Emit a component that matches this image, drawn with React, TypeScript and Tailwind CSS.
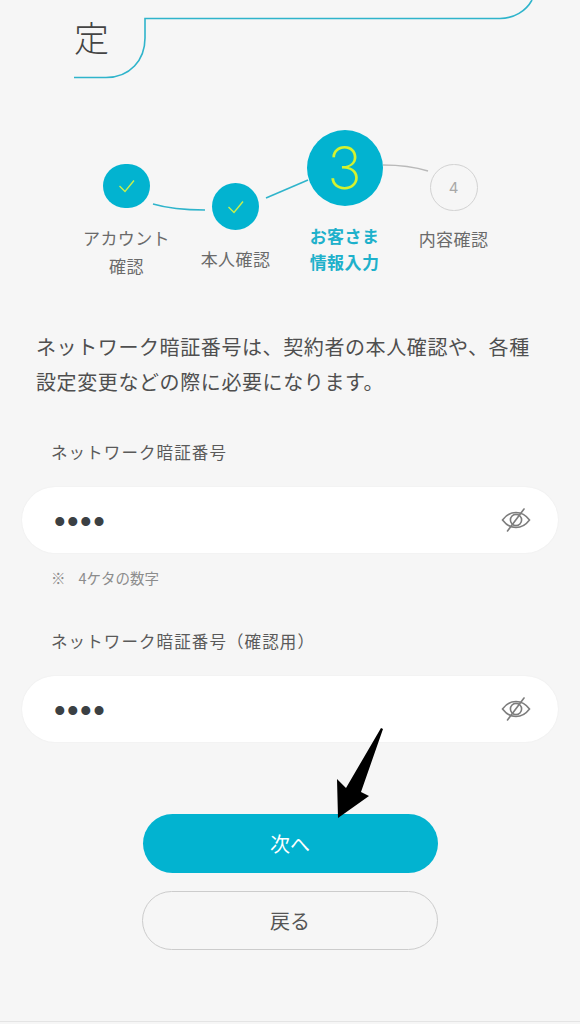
import React from 'react';

const Check = () => (
  <svg width="20" height="16" viewBox="0 0 20 16" fill="none" stroke="#c8f04a" strokeWidth="1.4">
    <path d="M2.5 8 L8 13.5 L17 2.5" />
  </svg>
);

const EyeOff = () => (
  <svg width="30" height="24" viewBox="0 0 30 24" fill="none" stroke="#7d7d7d" strokeWidth="1.6" strokeLinecap="round">
    <path d="M1.5 12 C6 6 10 4.5 15 4.5 C20 4.5 24 6 28.5 12 C24 18 20 19.5 15 19.5 C10 19.5 6 18 1.5 12 Z" />
    <circle cx="15" cy="12" r="5.6" />
    <path d="M23 1 L6.5 23" />
  </svg>
);

const PasswordField = ({ label, note }: { label: string; note?: string }) => (
  <div>
    <label className="block pl-[51px] text-[16.5px] leading-[24px] tracking-[1.1px] text-[#5a5a5a]">{label}</label>
    <div className="mt-[23px] mx-[22px] h-[66px] bg-white rounded-[33px] flex items-center justify-between pl-[32px] pr-[27px] shadow-[0_0_2px_rgba(0,0,0,0.06)]">
      <input
        type="password"
        readOnly
        value="1234"
        className="w-[200px] pt-[3px] bg-transparent outline-none text-[33px] tracking-[1.5px] text-[#3b4043] font-['Liberation_Sans',sans-serif]"
      />
      <EyeOff />
    </div>
    {note && (
      <p className="mt-[15px] pl-[51px] text-[14.5px] leading-[20px] text-[#8c8c8c]">
        ※<span className="ml-[13px]">{note}</span>
      </p>
    )}
  </div>
);

export default function App() {
  return (
    <div className="relative w-[580px] h-[1024px] overflow-hidden bg-[#f6f6f6] font-['Noto_Sans_CJK_JP',sans-serif] text-[#555]">
      {/* page title, cut off by the scroll */}
      <div className="relative h-[78px] pl-[74px] pt-[15px]">
        <svg className="absolute left-0 top-0" width="580" height="80" fill="none" stroke="#2fb4cb" strokeWidth="1.6">
          <path d="M74 77.5 H106 C130 77.5 145 60 145 38 V18.5 H500 C514 18.5 526 11 532 0" />
        </svg>
        <h1 className="text-[35px] leading-[44px] font-light text-[#444]">定</h1>
      </div>

      {/* stepper */}
      <div className="relative mt-[52px] flex pl-[72px] h-[150px]">
        <svg className="absolute left-0 top-0" width="580" height="120" fill="none" strokeWidth="1.6">
          <path d="M153 74 C170 79 188 80 205 80" stroke="#2fb4cb" />
          <path d="M266 68 L308 50" stroke="#2fb4cb" />
          <path d="M383 35 C400 35 415 37 428 41" stroke="#b9b9b9" />
        </svg>
        <div className="w-[109px] flex flex-col items-center pt-[34px]">
          <div className="w-[47px] h-[47px] rounded-full bg-[#02b3d0] flex items-center justify-center"><Check /></div>
          <p className="mt-[16px] text-center text-[17px] leading-[28px] tracking-[0.4px] text-[#6a6a6a] whitespace-nowrap">アカウント<br />確認</p>
        </div>
        <div className="w-[109px] flex flex-col items-center pt-[53px]">
          <div className="w-[47px] h-[47px] rounded-full bg-[#02b3d0] flex items-center justify-center"><Check /></div>
          <p className="mt-[15px] text-center text-[17px] leading-[28px] tracking-[0.4px] text-[#6a6a6a] whitespace-nowrap">本人確認</p>
        </div>
        <div className="w-[109px] flex flex-col items-center">
          <div className="w-[76px] h-[76px] rounded-full bg-[#02b3d0] flex items-center justify-center text-[58px] leading-none font-extralight text-[#d4f22f] font-['Inter',sans-serif]">3</div>
          <p className="mt-[17px] text-center text-[17px] leading-[26px] tracking-[0.4px] font-bold text-[#1eb1cb] whitespace-nowrap">お客さま<br />情報入力</p>
        </div>
        <div className="w-[109px] flex flex-col items-center pt-[34px]">
          <div className="w-[48px] h-[47px] rounded-full border border-[#d2d2d2] flex items-center justify-center pt-[2px] text-[15px] text-[#a8a8a8] font-['Inter',sans-serif]">4</div>
          <p className="mt-[14px] text-center text-[17px] leading-[28px] tracking-[0.4px] text-[#6a6a6a] whitespace-nowrap">内容確認</p>
        </div>
      </div>

      <p className="mt-[49px] pl-[36px] text-[20px] leading-[35px] tracking-[0.6px] text-[#4f4f4f] whitespace-nowrap">
        ネットワーク暗証番号は、契約者の本人確認や、各種<br />設定変更などの際に必要になります。
      </p>

      <div className="mt-[41px]">
        <PasswordField label="ネットワーク暗証番号" note="4ケタの数字" />
      </div>
      <div className="mt-[41px]">
        <PasswordField label="ネットワーク暗証番号（確認用）" />
      </div>

      <div className="mt-[72px] flex flex-col items-center gap-[18px]">
        <button className="w-[295px] h-[59px] rounded-full bg-[#02b3d0] text-white text-[20px]">次へ</button>
        <button className="w-[296px] h-[59px] rounded-full border border-[#cccccc] text-[#555] text-[20px]">戻る</button>
      </div>

      {/* annotation arrow */}
      <svg className="absolute left-[330px] top-[722px]" width="60" height="102" viewBox="330 722 60 102" fill="#000">
        <polygon points="338,818 337,779 346,788 381,728 383,729 361,792 369,796" />
      </svg>

      <div className="absolute left-0 right-0 bottom-0 h-[3px] border-t border-[#e4e4e4]" />
    </div>
  );
}
